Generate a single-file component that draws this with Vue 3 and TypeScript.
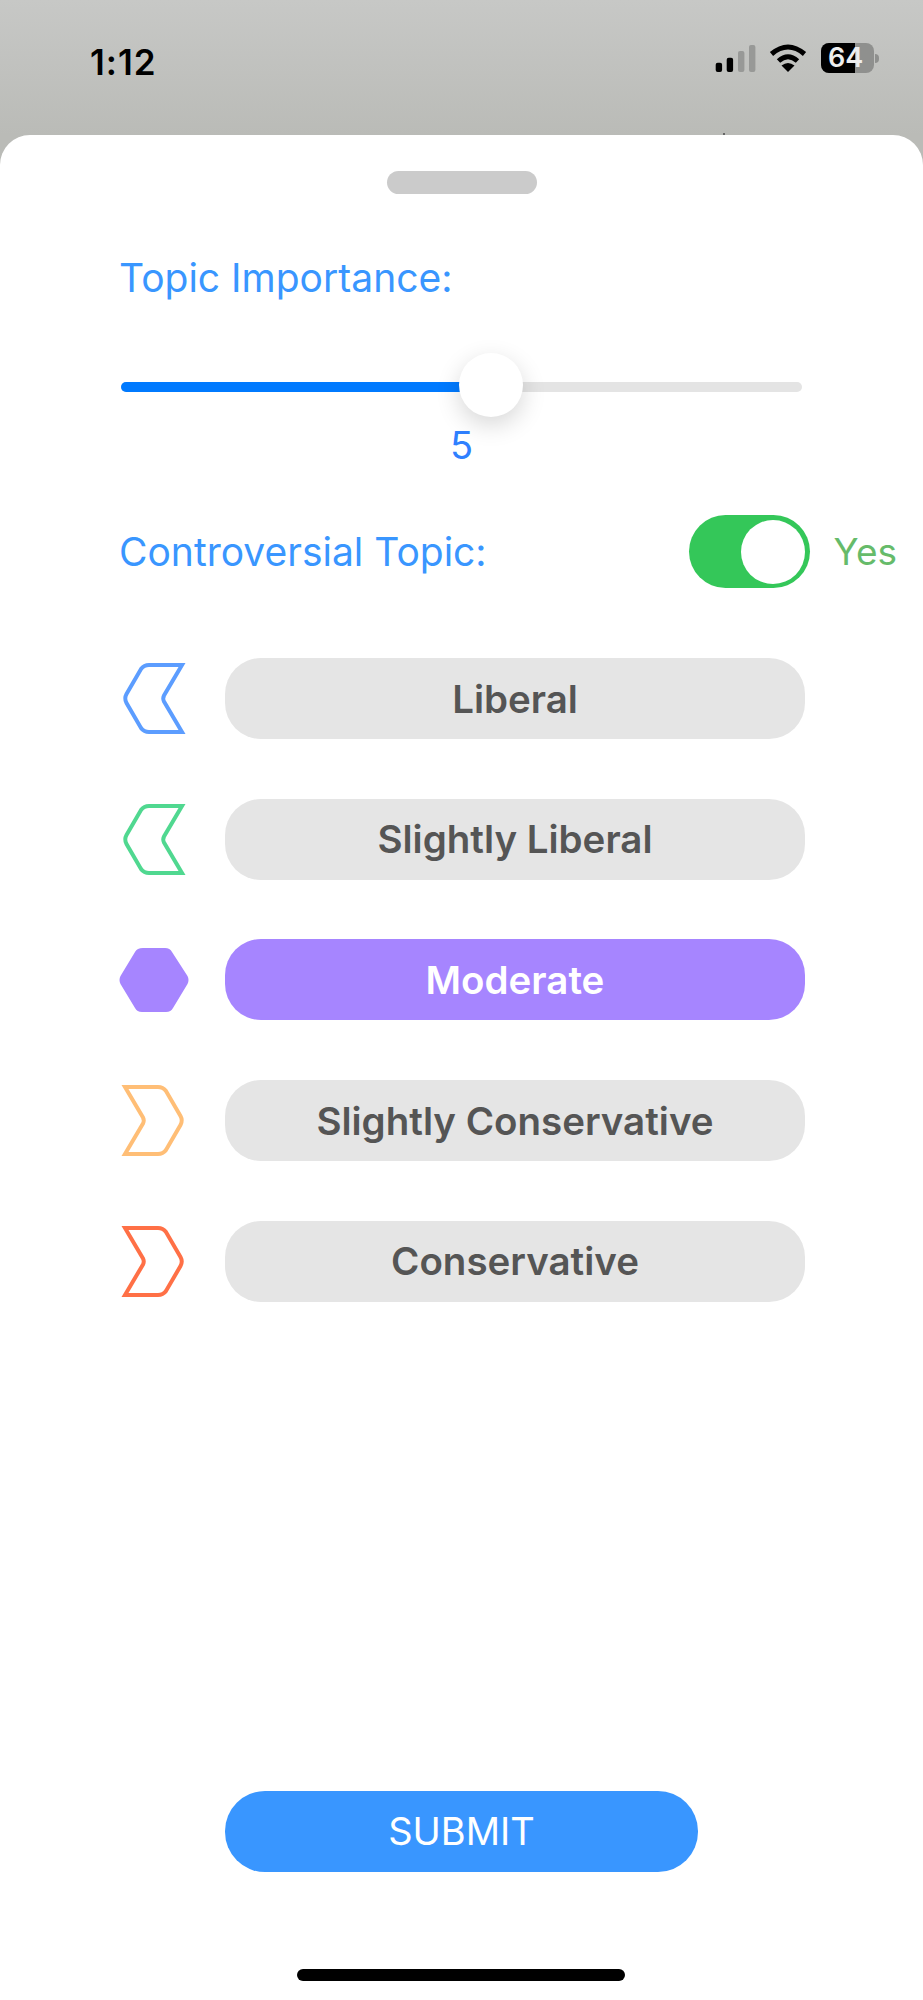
<template>
  <div class="screen">
    <header class="status-bar">
      <span class="time">1:12</span>
      <div class="status-icons">
        <svg class="signal" width="41" height="27" viewBox="0 0 41 27">
          <rect x="0.7" y="17.7" width="6.4" height="9.3" rx="2" fill="#000" />
          <rect x="11.7" y="12.7" width="6.4" height="14.3" rx="2" fill="#000" />
          <rect x="23" y="6" width="6.4" height="21" rx="2" fill="#989997" />
          <rect x="34" y="0" width="6.4" height="27" rx="2" fill="#989997" />
        </svg>
        <svg class="wifi" width="38" height="28" viewBox="0 0 38 28">
          <path d="M2.5 10 Q19 -4 35.5 10" fill="none" stroke="#000" stroke-width="5" />
          <path d="M9.5 17 Q19 8.5 28.5 17" fill="none" stroke="#000" stroke-width="5" />
          <path d="M19 28 L12.5 21.5 Q19 16.5 25.5 21.5 Z" fill="#000" />
        </svg>
        <div class="battery">
          <div class="battery-body">
            <div class="battery-level" :style="{ width: battery + '%' }"></div>
            <span class="battery-text">{{ battery }}</span>
          </div>
          <div class="battery-nub"></div>
        </div>
      </div>
    </header>

    <span class="speck"></span>

    <main class="sheet">
      <div class="handle"></div>

      <div class="label title">Topic Importance:</div>

      <div class="slider">
        <div class="track">
          <div class="track-fill" :style="{ width: sliderPos + '%' }"></div>
          <div class="thumb" :style="{ left: sliderPos + '%' }"></div>
        </div>
        <div class="slider-value">{{ importance }}</div>
      </div>

      <div class="toggle-row">
        <div class="label">Controversial Topic:</div>
        <div class="toggle">
          <div class="knob"></div>
        </div>
        <span class="toggle-text">Yes</span>
      </div>

      <div class="options">
        <div v-for="opt in options" :key="opt.label" class="option">
          <svg class="option-icon" width="72" height="81" viewBox="0 0 72 81">
            <path
              :d="shapes[opt.shape]"
              :fill="opt.selected ? opt.color : 'none'"
              :stroke="opt.selected ? 'none' : opt.color"
              stroke-width="4"
            />
          </svg>
          <button :class="['pill', { selected: opt.selected }]">{{ opt.label }}</button>
        </div>
      </div>

      <button class="submit">SUBMIT</button>
      <div class="home-indicator"></div>
    </main>
  </div>
</template>

<script setup lang="ts">
type Shape = 'left' | 'hex' | 'right'

interface Option {
  label: string
  color: string
  shape: Shape
  selected?: boolean
}

const battery = 64
const importance = 5
const sliderPos = 54.3

const shapes: Record<Shape, string> = {
  left: 'M64 7 H31 Q26 7 23 11 L8.5 36 Q6 40.5 8.5 45 L23 70 Q26 74 31 74 H64 L46 43.5 Q44.5 40.5 46 37.5 Z',
  hex: 'M25 9 H47 Q52 9 54 13 L69.5 37 Q71.5 41 69.5 45 L55 69 Q53 73 48 73 H24 Q19 73 17 69 L2.5 45 Q0.5 41 2.5 37 L17 13 Q19 9 25 9 Z',
  right: 'M7 7 H40 Q45 7 48 11 L62.5 36 Q65 40.5 62.5 45 L48 70 Q45 74 40 74 H7 L25 43.5 Q26.5 40.5 25 37.5 Z',
}

const options: Option[] = [
  { label: 'Liberal', color: '#5C9DFF', shape: 'left' },
  { label: 'Slightly Liberal', color: '#50D890', shape: 'left' },
  { label: 'Moderate', color: '#A685FF', shape: 'hex', selected: true },
  { label: 'Slightly Conservative', color: '#FFBE76', shape: 'right' },
  { label: 'Conservative', color: '#FF7046', shape: 'right' },
]
</script>

<style>
html,
body {
  margin: 0;
  background: #fff;
}
</style>

<style scoped>
.screen {
  position: relative;
  width: 923px;
  height: 2000px;
  display: flex;
  flex-direction: column;
  background: linear-gradient(#c7c8c6, #babbb7 135px);
  font-family: Inter, "Liberation Sans", sans-serif;
  overflow: hidden;
}

.status-bar {
  height: 135px;
  box-sizing: border-box;
  flex-shrink: 0;
  display: flex;
  justify-content: space-between;
  padding: 43px 44px 0 90px;
}

.time {
  font-size: 35px;
  font-weight: 600;
  line-height: 34px;
  margin-top: 2px;
  color: #000;
  letter-spacing: 1px;
}

.status-icons {
  display: flex;
  align-items: flex-start;
}

.signal {
  margin: 2px 0 0 0;
}

.wifi {
  margin: 1px 14px 0 13px;
}

.battery {
  display: flex;
  align-items: center;
}

.battery-body {
  position: relative;
  width: 53px;
  height: 30px;
  border-radius: 8px;
  background: #8f908e;
}

.battery-level {
  height: 100%;
  border-radius: 8px 0 0 8px;
  background: #000;
}

.battery-text {
  position: absolute;
  top: 0;
  left: 7px;
  font-size: 27px;
  line-height: 30px;
  font-weight: 600;
  color: #eee;
}

.battery-nub {
  width: 4px;
  height: 9px;
  margin-left: 1px;
  border-radius: 0 4px 4px 0;
  background: #8f908e;
}

.speck {
  position: absolute;
  left: 723px;
  top: 133px;
  width: 2px;
  height: 2px;
  background: #666;
}

.sheet {
  flex: 1;
  display: flex;
  flex-direction: column;
  background: #fff;
  border-radius: 30px 30px 0 0;
  padding: 36px 0 0 119px;
}

.handle {
  width: 150px;
  height: 23px;
  margin-left: 268px;
  border-radius: 12px;
  background: #cbcbcb;
}

.label {
  font-size: 39px;
  line-height: 46px;
  color: #3996ff;
}

.title {
  margin-top: 61px;
}

.slider {
  width: 681px;
  margin-left: 2px;
}

.track {
  position: relative;
  margin-top: 81px;
  height: 10px;
  border-radius: 5px;
  background: #e4e4e4;
}

.track-fill {
  height: 100%;
  border-radius: 5px;
  background: #007aff;
}

.thumb {
  position: absolute;
  top: -29px;
  width: 64px;
  height: 64px;
  margin-left: -32px;
  border-radius: 50%;
  background: #fff;
  box-shadow: 0 8px 24px rgba(0, 0, 0, 0.16);
}

.slider-value {
  margin-top: 30px;
  text-align: center;
  font-size: 38px;
  line-height: 46px;
  color: #2f80ff;
}

.toggle-row {
  display: flex;
  align-items: center;
  margin-top: 47px;
}

.toggle {
  width: 121px;
  height: 73px;
  margin-left: 202px;
  box-sizing: border-box;
  display: flex;
  justify-content: flex-end;
  align-items: center;
  padding-right: 5px;
  border-radius: 37px;
  background: #34c759;
}

.knob {
  width: 64px;
  height: 64px;
  border-radius: 50%;
  background: #fff;
}

.toggle-text {
  margin-left: 24px;
  font-size: 37px;
  line-height: 46px;
  color: #66bb6a;
}

.options {
  display: flex;
  flex-direction: column;
  gap: 59.7px;
  margin-top: 70px;
  margin-left: -1px;
}

.option {
  display: flex;
  align-items: center;
  gap: 35px;
}

.option-icon {
  flex-shrink: 0;
}

.pill {
  width: 580px;
  height: 81px;
  padding: 0;
  border: none;
  border-radius: 36px;
  background: #e5e5e5;
  color: #555;
  font-family: inherit;
  font-size: 38.5px;
  font-weight: 570;
}

.pill.selected {
  background: #a685ff;
  color: #fff;
}

.submit {
  align-self: flex-start;
  width: 473px;
  height: 81px;
  margin: 489px 0 0 106px;
  padding: 0;
  border: none;
  border-radius: 40px;
  background: #3996ff;
  color: #fff;
  font-family: inherit;
  font-size: 38px;
}

.home-indicator {
  width: 328px;
  height: 12px;
  margin: 97px 0 0 178px;
  border-radius: 6px;
  background: #000;
}
</style>
